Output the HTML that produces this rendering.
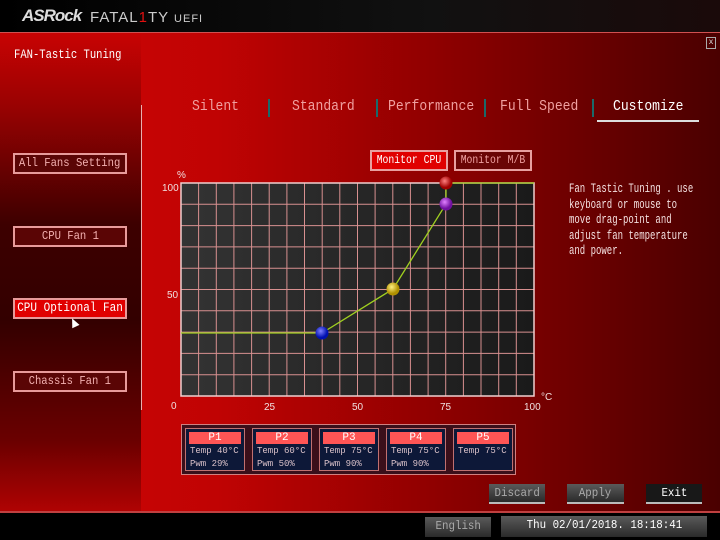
<!DOCTYPE html>
<html><head><meta charset="utf-8"><style>
*{margin:0;padding:0;box-sizing:border-box}
body{width:720px;height:540px;overflow:hidden;position:relative;background:#000;font-family:"Liberation Mono",monospace;color:#fff;white-space:nowrap}
.abs{position:absolute}
.s{display:inline-block;flex:none}
#main{left:0;top:33px;width:720px;height:479px;background:linear-gradient(90deg,#d00606 0%,#c00303 30%,#900000 60%,#4a0000 100%)}
#left{left:0;top:33px;width:141px;height:479px;background:linear-gradient(180deg,#c80303 0%,#9a0202 15%,#3d0000 40%,#330000 60%,#6a0000 85%,#b00303 100%)}
.btn,.mon,.fb{display:flex;justify-content:center}
.btn{position:absolute;left:13px;width:114px;height:21px;border:2px solid #e89a9a;background:#5a0505;color:#f3b0b0;font-size:12px;line-height:17px}
.btn .s{transform:scaleX(0.88)}
.tab{position:absolute;top:98px;font-size:15px;color:#f0a0a0;transform:scaleX(0.87);transform-origin:left}
.sep{position:absolute;top:99px;width:2px;height:18px;background:#1a6a6a}
.mon{position:absolute;top:150px;height:21px;border:2px solid #e8a0a0;font-size:11.5px;line-height:17px}
.mon .s{transform:scaleX(0.85)}
.pbox{position:absolute;top:428px;width:60px;height:43px;border:1px solid #c07070;background:#0d1838;font-size:9px;color:#d8c0c8}
.pbox .h{background:#ff5555;margin:3px 3px 1px;height:12px;text-align:center;color:#fff;font-size:11px;line-height:12px}
.pbox div.l{padding-left:4px;line-height:13px}
.fb{position:absolute;height:20px;font-size:12px;line-height:18px;background:linear-gradient(#5a5a5a,#2a2a2a);border-bottom:2px solid #bbb;color:#aaa}
.fb .s{transform:scaleX(0.9)}
</style></head><body>
<div class="abs" style="left:0;top:0;width:720px;height:32px;background:linear-gradient(90deg,#000,#111 60%,#1a0a0a)"></div>
<div class="abs" style="left:22px;top:6px;font:italic bold 17px 'Liberation Sans',sans-serif;color:#ddd;letter-spacing:-1px">ASRock</div>
<div class="abs" style="left:90px;top:9px;font:15px 'Liberation Sans',sans-serif;color:#ccc;letter-spacing:1px">FATAL<span style="color:#e01010">1</span>TY <span style="font-size:11px">UEFI</span></div>
<div class="abs" style="left:0;top:32px;width:720px;height:2px;background:#d05050"></div>
<div id="main" class="abs"></div>
<div id="left" class="abs"></div>
<div class="abs" style="left:14px;top:47px;font-size:13px;transform:scaleX(0.81);transform-origin:left">FAN-Tastic Tuning</div>
<div class="abs" style="left:706px;top:37px;width:10px;height:12px;border:1px solid #aaa;font-size:8px;color:#ddd;text-align:center;line-height:10px">x</div>
<div class="abs" style="left:141px;top:105px;width:1px;height:305px;background:#e8b0b0"></div>
<div class="tab" style="left:192px">Silent</div><div class="sep" style="left:268px"></div>
<div class="tab" style="left:292px">Standard</div><div class="sep" style="left:376px"></div>
<div class="tab" style="left:388px">Performance</div><div class="sep" style="left:484px"></div>
<div class="tab" style="left:500px">Full Speed</div><div class="sep" style="left:592px"></div>
<div class="tab" style="left:613px;color:#fff">Customize</div>
<div class="abs" style="left:597px;top:120px;width:102px;height:2px;background:#ddd"></div>
<div class="btn" style="top:153px"><span class="s">All Fans Setting</span></div>
<div class="btn" style="top:226px"><span class="s">CPU Fan 1</span></div>
<div class="btn" style="top:298px;background:#e00000;color:#fff;font-size:12.5px"><span class="s">CPU Optional Fan</span></div>
<div class="btn" style="top:371px"><span class="s">Chassis Fan 1</span></div>
<div class="abs" style="left:70px;top:318px;width:0;height:0;border-left:4px solid transparent;border-right:4px solid transparent;border-bottom:9px solid #fff;transform:rotate(-25deg)"></div>
<div class="mon" style="left:370px;width:78px;background:#e00000;color:#fff"><span class="s">Monitor CPU</span></div>
<div class="mon" style="left:454px;width:78px;background:#6a0505;color:#f0a0a0"><span class="s">Monitor M/B</span></div>
<div class="abs" style="left:569px;top:182px;font-size:12.5px;line-height:15.5px;color:#f4e0e0;transform:scaleX(0.72);transform-origin:left">Fan Tastic Tuning . use<br>keyboard or mouse to<br>move drag-point and<br>adjust fan temperature<br>and power.</div>
<svg class="abs" style="left:0;top:0" width="720" height="540">
<defs>
<linearGradient id="gb" x1="0" x2="1"><stop offset="0" stop-color="#333"/><stop offset="1" stop-color="#1a1a1a"/></linearGradient>
<radialGradient id="r" cx="0.4" cy="0.35"><stop offset="0" stop-color="#ff8080"/><stop offset="1" stop-color="#a00000"/></radialGradient>
<radialGradient id="p" cx="0.4" cy="0.35"><stop offset="0" stop-color="#e080ff"/><stop offset="1" stop-color="#7010a0"/></radialGradient>
<radialGradient id="y" cx="0.4" cy="0.35"><stop offset="0" stop-color="#fff080"/><stop offset="1" stop-color="#b09000"/></radialGradient>
<radialGradient id="b" cx="0.4" cy="0.35"><stop offset="0" stop-color="#8080ff"/><stop offset="1" stop-color="#0010b0"/></radialGradient>
</defs>
<rect x="181" y="183" width="353" height="213" fill="url(#gb)"/>
<g stroke="#d89090" stroke-width="1">
<line x1="198.6" y1="183" x2="198.6" y2="396"/><line x1="216.3" y1="183" x2="216.3" y2="396"/><line x1="233.9" y1="183" x2="233.9" y2="396"/><line x1="251.6" y1="183" x2="251.6" y2="396"/><line x1="269.2" y1="183" x2="269.2" y2="396"/><line x1="286.9" y1="183" x2="286.9" y2="396"/><line x1="304.5" y1="183" x2="304.5" y2="396"/><line x1="322.2" y1="183" x2="322.2" y2="396"/><line x1="339.8" y1="183" x2="339.8" y2="396"/><line x1="357.5" y1="183" x2="357.5" y2="396"/><line x1="375.1" y1="183" x2="375.1" y2="396"/><line x1="392.8" y1="183" x2="392.8" y2="396"/><line x1="410.4" y1="183" x2="410.4" y2="396"/><line x1="428.1" y1="183" x2="428.1" y2="396"/><line x1="445.7" y1="183" x2="445.7" y2="396"/><line x1="463.4" y1="183" x2="463.4" y2="396"/><line x1="481" y1="183" x2="481" y2="396"/><line x1="498.7" y1="183" x2="498.7" y2="396"/><line x1="516.3" y1="183" x2="516.3" y2="396"/>
<line x1="181" y1="204.3" x2="534" y2="204.3"/><line x1="181" y1="225.6" x2="534" y2="225.6"/><line x1="181" y1="246.9" x2="534" y2="246.9"/><line x1="181" y1="268.2" x2="534" y2="268.2"/><line x1="181" y1="289.5" x2="534" y2="289.5"/><line x1="181" y1="310.8" x2="534" y2="310.8"/><line x1="181" y1="332.1" x2="534" y2="332.1"/><line x1="181" y1="353.4" x2="534" y2="353.4"/><line x1="181" y1="374.7" x2="534" y2="374.7"/>
</g>
<rect x="181" y="183" width="353" height="213" fill="none" stroke="#f0d0d0" stroke-width="1.5"/>
<polyline points="181,333 322,333 393,289 446,204 446,183 534,183" fill="none" stroke="#a0d020" stroke-width="1.3"/>
<circle cx="446" cy="183" r="6.5" fill="url(#r)"/>
<circle cx="446" cy="204" r="6.5" fill="url(#p)"/>
<circle cx="393" cy="289" r="6.5" fill="url(#y)"/>
<circle cx="322" cy="333" r="6.5" fill="url(#b)"/>
<g font-family="Liberation Sans,sans-serif" font-size="10" fill="#f0e0e0">
<text x="177" y="178">%</text><text x="162" y="191">100</text><text x="167" y="298">50</text>
<text x="171" y="409">0</text><text x="264" y="410">25</text><text x="352" y="410">50</text><text x="440" y="410">75</text><text x="524" y="410">100</text><text x="541" y="400">°C</text>
</g>
</svg>
<div class="abs" style="left:181px;top:424px;width:335px;height:51px;border:1px solid #d08080;background:#3a0f1a"></div>
<div class="pbox" style="left:185px"><div class="h">P1</div><div class="l">Temp 40°C</div><div class="l">Pwm  29%</div></div>
<div class="pbox" style="left:252px"><div class="h">P2</div><div class="l">Temp 60°C</div><div class="l">Pwm  50%</div></div>
<div class="pbox" style="left:319px"><div class="h">P3</div><div class="l">Temp 75°C</div><div class="l">Pwm  90%</div></div>
<div class="pbox" style="left:386px"><div class="h">P4</div><div class="l">Temp 75°C</div><div class="l">Pwm  90%</div></div>
<div class="pbox" style="left:453px"><div class="h">P5</div><div class="l">Temp 75°C</div></div>
<div class="fb" style="left:489px;top:484px;width:56px"><span class="s">Discard</span></div>
<div class="fb" style="left:567px;top:484px;width:57px"><span class="s">Apply</span></div>
<div class="fb" style="left:646px;top:484px;width:56px;background:#181818;color:#fff"><span class="s">Exit</span></div>
<div class="abs" style="left:0;top:511px;width:720px;height:2px;background:#c04040"></div>
<div class="fb" style="left:425px;top:517px;width:66px;border-bottom:0;height:20px"><span class="s">English</span></div>
<div class="fb" style="left:501px;top:516px;width:206px;border-bottom:0;height:21px;color:#fff"><span class="s">Thu 02/01/2018. 18:18:41</span></div>
</body></html>
